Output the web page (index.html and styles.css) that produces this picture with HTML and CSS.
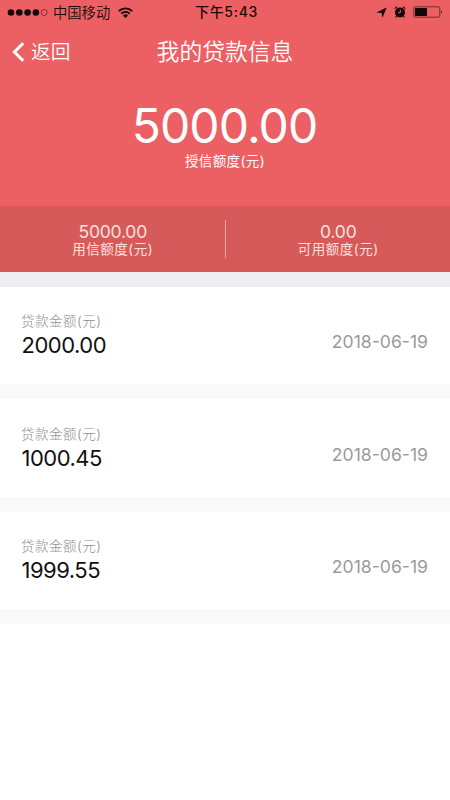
FILE: index.html
```html
<!DOCTYPE html>
<html lang="zh-CN">
<head>
<meta charset="utf-8">
<meta name="viewport" content="width=device-width, initial-scale=1">
<title>我的贷款信息</title>
<link rel="stylesheet" href="styles.css">
</head>
<body>
<header class="hero">
  <div class="status">
    <div class="status-left">
      <svg class="signal" width="41" height="9" viewBox="0 0 41 9"><g fill="#140506"><circle cx="4" cy="4.5" r="3.3"/><circle cx="12.3" cy="4.5" r="3.3"/><circle cx="20.6" cy="4.5" r="3.3"/><circle cx="28.9" cy="4.5" r="3.3"/></g><circle cx="37.2" cy="4.5" r="3" fill="none" stroke="#571f22" stroke-width=".7"/></svg>
      <span class="carrier">中国移动</span>
      <svg class="wifi" width="15" height="11" viewBox="0 0 15 11"><g fill="none" stroke="#140506" stroke-width="1.8"><path d="M.8 4.1a9.5 9.5 0 0 1 13.4 0"/><path d="M3.2 6.6a6.1 6.1 0 0 1 8.6 0"/></g><path fill="#140506" d="M5 8.4a3.6 3.6 0 0 1 5 0L7.5 11z"/></svg>
    </div>
    <span class="clock">下午5:43</span>
    <div class="status-right">
      <svg width="11" height="11" viewBox="0 0 11 11"><path fill="#140506" d="M10.7.4 6.4 10.8 5.6 5.9.3 5.4z"/></svg>
      <svg width="12" height="12" viewBox="0 0 12 12"><circle cx="6" cy="6.4" r="5" fill="#140506"/><path d="M.6 2.6 2.8.8M11.4 2.6 9.2.8M2.7 10l-1 1.4M9.3 10l1 1.4" stroke="#140506" stroke-width="1.1"/><path d="M6.3 3.7v3H4" fill="none" stroke="#ec6064" stroke-width="1"/></svg>
      <svg width="30" height="12" viewBox="0 0 30 12"><rect x=".8" y=".8" width="26" height="10.4" rx="1" fill="none" stroke="#571f22" stroke-width=".8"/><path fill="#140506" d="M2 2h12v8H2zM28 4q1.5 2 0 4z"/></svg>
    </div>
  </div>
  <nav class="navbar">
    <a class="back"><svg width="13" height="20" viewBox="0 0 13 20"><path d="M11.2 1.2 2.4 10l8.8 8.8" fill="none" stroke="#fff" stroke-width="3"/></svg><span>返回</span></a>
    <h1 class="title">我的贷款信息</h1>
  </nav>
  <div class="credit">
    <div class="credit-amount">5000.00</div>
    <div class="credit-label">授信额度(元)</div>
  </div>
  <div class="stats">
    <div class="stat"><div class="stat-value">5000.00</div><div class="stat-label">用信额度(元)</div></div>
    <div class="divider"></div>
    <div class="stat"><div class="stat-value">0.00</div><div class="stat-label">可用额度(元)</div></div>
  </div>
</header>
<main class="loans">
  <section class="loan"><div><div class="loan-label">贷款金额(元)</div><div class="loan-amount">2000.00</div></div><time class="loan-date">2018-06-19</time></section>
  <section class="loan"><div><div class="loan-label">贷款金额(元)</div><div class="loan-amount">1000.45</div></div><time class="loan-date">2018-06-19</time></section>
  <section class="loan"><div><div class="loan-label">贷款金额(元)</div><div class="loan-amount">1999.55</div></div><time class="loan-date">2018-06-19</time></section>
</main>
</body>
</html>
```
FILE: styles.css
```css
* { box-sizing: border-box; }
body {
  margin: 0;
  background: #fff;
  font-family: Inter, "Noto Sans CJK SC", sans-serif;
  color: #111;
}
svg { display: block; flex: none; }
.hero { height: 272px; background: #ec6064; color: #fff; }
.status {
  display: grid;
  grid-template-columns: 1fr auto 1fr;
  align-items: center;
  height: 24px;
  padding: 0 7px;
  color: #1c0809;
}
.status-left, .status-right { display: flex; align-items: center; }
.carrier { margin: 1px 8px 0 5px; font-size: 14.3px; line-height: 23px; font-weight: 350; }
.clock { padding-left: 3px; font-size: 14px; line-height: 24px; font-weight: 500; letter-spacing: .7px; }
.status-right { justify-content: flex-end; gap: 7px; }
.navbar {
  display: grid;
  grid-template-columns: 1fr auto 1fr;
  align-items: center;
  height: 54px;
  margin-top: 1px;
}
.back { display: flex; align-items: center; gap: 6px; padding-left: 12px; font-size: 19.7px; line-height: 30px; font-weight: 350; }
.title { margin: 0; font-size: 22.8px; line-height: 34px; font-weight: 350; }
.credit { height: 127px; padding-top: 19px; text-align: center; }
.credit-amount { font-size: 48px; line-height: 55px; font-weight: 400; letter-spacing: -.9px; text-indent: -.9px; }
.credit-label { font-size: 13.5px; line-height: 16px; font-weight: 400; letter-spacing: .4px; }
.stats { display: flex; height: 66px; padding-top: 14px; background: #d75a5b; color: #fbe1dc; text-align: center; }
.stat { flex: 1; padding: 3px 0 0 1px; }
.stat-value { font-size: 17.5px; line-height: 18px; font-weight: 400; letter-spacing: -.2px; }
.stat-label { font-size: 13.5px; line-height: 17px; font-weight: 400; letter-spacing: .5px; }
.divider { width: 1px; height: 38px; background: #eda3a0; }
.loans { border-top: 15px solid #eeedf2; }
.loan {
  display: flex;
  justify-content: space-between;
  height: 112.4px;
  padding: 24.4px 22px 0 21px;
  border-bottom: 15px solid #f9f9f9;
}
.loan-label { font-size: 13.5px; line-height: 20px; font-weight: 300; letter-spacing: .5px; color: #8f8f8f; }
.loan-amount { padding: 1px 0 0 .5px; font-size: 22px; line-height: 27px; font-weight: 400; letter-spacing: -.5px; }
.loan-date { padding-top: 20px; font-size: 17.6px; line-height: 22px; font-weight: 400; letter-spacing: 0; color: #9a9a9a; }
```
